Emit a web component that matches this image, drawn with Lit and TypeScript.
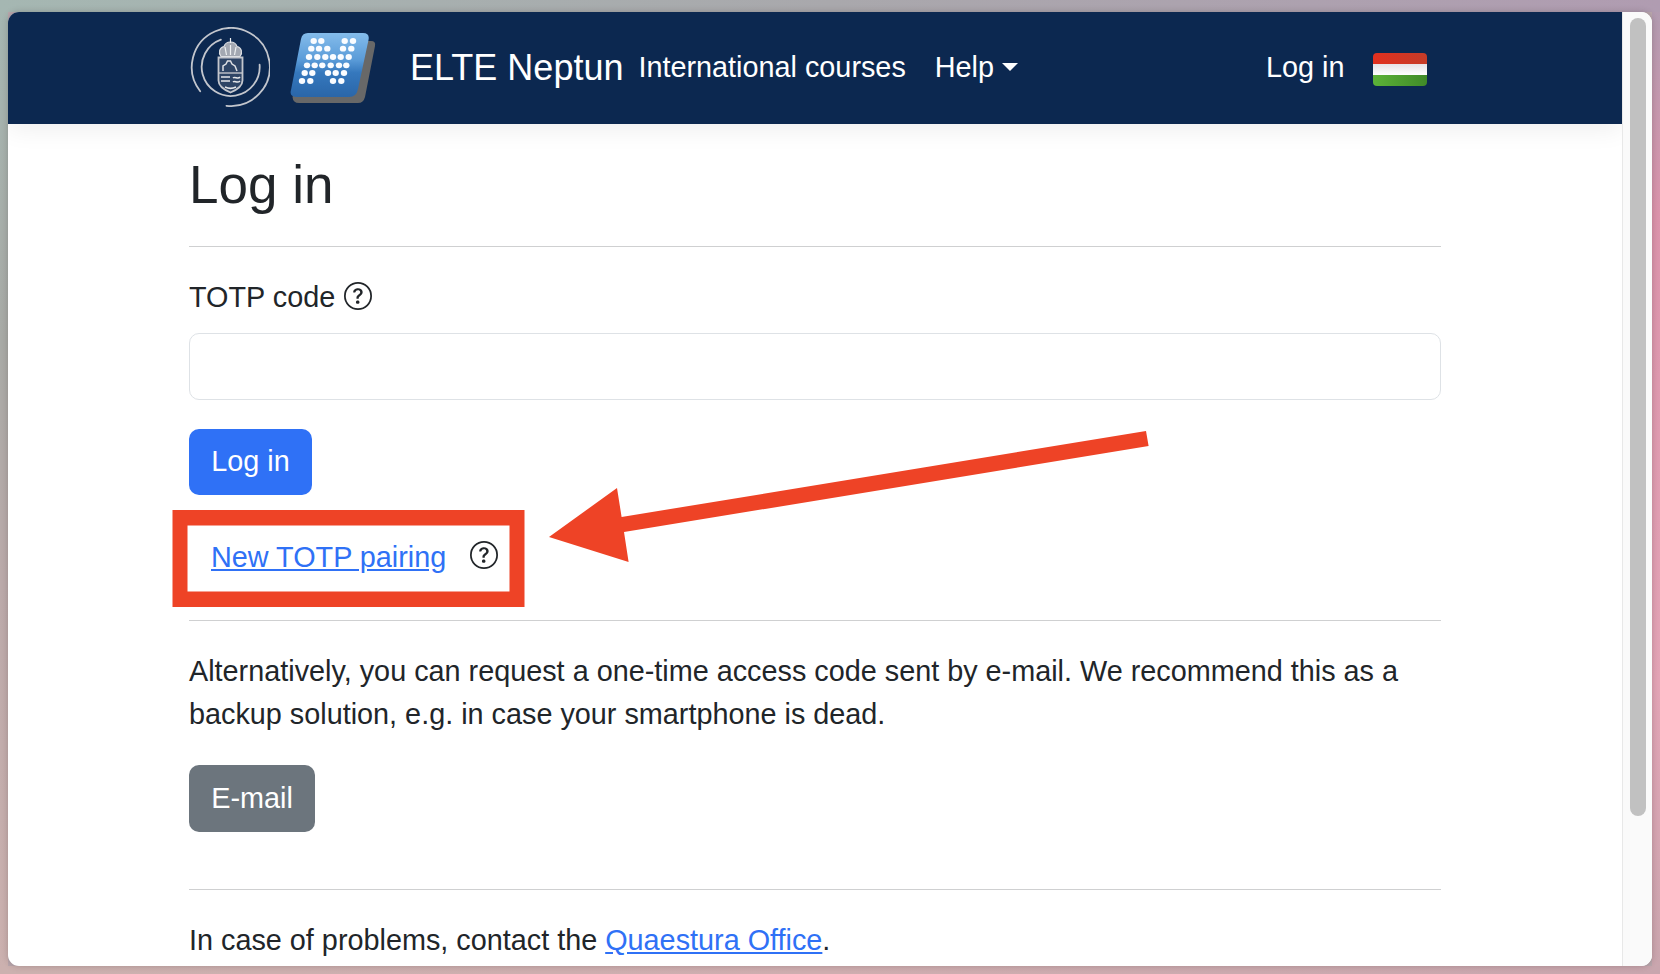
import { LitElement, html, css, svg } from "lit";
import { customElement } from "lit/decorators.js";

const FS = 28.8;

const helpIcon = html`<svg class="help" viewBox="0 0 16 16" fill="currentColor" aria-hidden="true">
  <path d="M8 15A7 7 0 1 1 8 1a7 7 0 0 1 0 14zm0 1A8 8 0 1 0 8 0a8 8 0 0 0 0 16z"/>
  <path d="M5.255 5.786a.237.237 0 0 0 .241.247h.825c.138 0 .248-.113.266-.25.09-.656.54-1.134 1.342-1.134.686 0 1.314.343 1.314 1.168 0 .635-.374.927-.965 1.371-.673.489-1.206 1.06-1.168 1.987l.003.217a.25.25 0 0 0 .25.246h.811a.25.25 0 0 0 .25-.25v-.105c0-.718.273-.927 1.01-1.486.609-.463 1.244-.977 1.244-2.056 0-1.511-1.276-2.241-2.673-2.241-1.267 0-2.655.59-2.75 2.286zm1.557 5.763c0 .533.425.927 1.01.927.609 0 1.028-.394 1.028-.927 0-.552-.42-.94-1.029-.94-.584 0-1.009.388-1.009.94z"/>
</svg>`;

const emblem = html`<svg class="emblem" viewBox="0 0 80 82" fill="none" stroke="#c3c6cd" stroke-width="1.800" aria-hidden="true">
  <path d="M10.200 64.200A39 39 0 1 1 36.400 78.800" stroke-linecap="round"/>
  <path d="M69.600 37.700A29 29 0 1 1 30.900 12.700" stroke-linecap="round"/>
  <path d="M28.500 30.500h24v23c0 6-6 9.500-12 12-6-2.500-12-6-12-12z" fill="#5c6980" fill-opacity=".45" stroke-width="1.800"/>
  <path d="M28.500 46h24" stroke-width="1.400"/>
  <path d="M33 44v-5l3-2 1.500-3 3 0 1.500 3 3 2 2 5" stroke="#dfe1e5" stroke-width="1.500"/>
  <path d="M31 50h9M31 54h9M43 51c2-2 5 2 7-1M43 55c2-2 4 2 7-1M35 60c4 2 7 2 11 0" stroke="#e6e7ea" stroke-width="1.500"/>
  <path d="M31 29.500c-3-4-1.500-9 3-10 1-3 3.500-4.500 6.500-4.500s5.500 1.500 6.500 4.500c4.500 1 6 6 3 10z" fill="#a3a8b2" stroke="#dcdee2" stroke-width="1.200"/>
  <path d="M40.500 11v5M35 20l1.500 8M46 20l-1.500 8M40.500 18v10" stroke="#eef0f2" stroke-width="1.200"/>
</svg>`;

const rows: [number, number[]][] = [
  [10, [25.7, 33.3, 56.7, 65]],
  [17.7, [23.3, 31, 39.3, 55, 63.3]],
  [26, [21, 29.3, 37.3, 45, 52.7, 60.7]],
  [34.3, [19, 26.7, 34.3, 42.7, 51, 58.3]],
  [42, [16.7, 24.3, 40, 47.7, 56]],
  [50, [14, 22.3, 45, 53.3]],
];

const neptun = html`<svg class="neptun" viewBox="0 0 88 74" aria-hidden="true">
  <defs>
    <linearGradient id="np" x1="0" y1="0" x2="0" y2="1">
      <stop offset="0" stop-color="#84bceb"/>
      <stop offset=".42" stop-color="#5a9bd8"/>
      <stop offset=".62" stop-color="#3578bd"/>
      <stop offset="1" stop-color="#2a66a9"/>
    </linearGradient>
  </defs>
  <path d="M24 10H83Q88 10 87 15L77 66Q75.500 72 70 72H11Q5 72 4.500 66z" fill="#686868"/>
  <path d="M20 2H75Q82 2 80.500 9L70 58Q68.500 66 61 66H9Q1 66 3 59L13 8Q14 2 20 2z" fill="url(#np)"/>
  ${rows.map(([y, xs]) =>
    xs.map((x) => svg`<ellipse cx=${x} cy=${y} rx="3.200" ry="2.900" fill="#fafcff"/>`)
  )}
</svg>`;

const flag = html`<svg class="flag" viewBox="0 0 54 33" aria-hidden="true">
  <defs>
    <linearGradient id="fr" x1="0" x2="1"><stop offset="0" stop-color="#e2301f"/><stop offset="1" stop-color="#c53c28"/></linearGradient>
    <linearGradient id="fg" x1="0" x2="1"><stop offset="0" stop-color="#5cb338"/><stop offset="1" stop-color="#408a28"/></linearGradient>
    <linearGradient id="fw" x1="0" y1="0" x2="0" y2="1"><stop offset="0" stop-color="#e6e2e6"/><stop offset="1" stop-color="#ffffff"/></linearGradient>
    <clipPath id="fc"><rect width="54" height="33" rx="4"/></clipPath>
  </defs>
  <g clip-path="url(#fc)">
    <rect width="54" height="12" fill="url(#fr)"/>
    <rect y="11" width="54" height="11" fill="url(#fw)"/>
    <rect y="22" width="54" height="11" fill="url(#fg)"/>
  </g>
</svg>`;

@customElement("app-root")
export class AppRoot extends LitElement {
  static styles = css`
    :host {
      display: block;
      box-sizing: border-box;
      width: 1660px;
      height: 974px;
      padding: 12px 8px 8px;
      overflow: hidden;
      font-family: "Liberation Sans", Arial, sans-serif;
      font-size: ${FS}px;
      line-height: 42px;
      color: #212529;
      background-color: #b9a7ad;
      background-repeat: no-repeat;
      background-image:
        linear-gradient(to right, #a5b7b2, #a9a8ac 50%, #b09cb1),
        linear-gradient(to right, #ccb1af, #cfaeb0 50%, #c9a6ae),
        linear-gradient(to bottom, #a5b7b2, #a8aaa6 35%, #bbaaaa 60%, #ccb1af),
        linear-gradient(to bottom, #b09cb1, #db93ab 22%, #e3a4b6 70%, #c9a6ae);
      background-size: 100% 12px, 100% 8px, 8px 100%, 8px 100%;
      background-position: top left, bottom left, top left, top right;
    }
    .window {
      position: relative;
      display: flex;
      height: 954px;
      border-radius: 11px;
      overflow: hidden;
      background: #fff;
      box-shadow: 0 0 6px rgba(60, 40, 40, 0.25);
    }
    .main {
      flex: 1;
      min-width: 0;
      overflow: hidden;
    }
    .navbar {
      position: relative;
      display: flex;
      align-items: center;
      height: 112px;
      padding-left: 182px;
      background: #0c2850;
      color: #fff;
      box-shadow: 0 5px 24px rgba(0, 0, 0, 0.07);
    }
    .emblem {
      width: 80px;
      height: 82px;
      flex: none;
      filter: blur(0.4px);
    }
    .neptun {
      width: 88px;
      height: 74px;
      flex: none;
      margin-left: 18px;
      filter: blur(0.5px);
    }
    .brand {
      margin-left: 34px;
      padding-bottom: 1px;
      font-size: 36px;
    }
    .nav-link {
      padding-bottom: 2px;
      color: #fff;
      text-decoration: none;
    }
    .nav-first {
      margin-left: 15px;
    }
    .help-link {
      display: inline-flex;
      align-items: center;
      margin-left: 29px;
    }
    .caret {
      width: 0;
      height: 0;
      margin-left: 8px;
      border-top: 8px solid #fff;
      border-left: 8px solid transparent;
      border-right: 8px solid transparent;
    }
    .login {
      margin-left: 248px;
    }
    .flag {
      width: 54px;
      height: 33px;
      margin: 3px 0 0 29px;
      filter: blur(0.4px);
    }
    .content {
      width: 1252px;
      margin-left: 181px;
      padding-top: 30px;
    }
    h1 {
      margin: 0;
      font-size: 53px;
      font-weight: 400;
      line-height: 62px;
    }
    hr {
      height: 1px;
      margin: 0;
      border: 0;
      background: #cfd0d1;
    }
    .h1-rule {
      margin-top: 30px;
    }
    .label {
      display: flex;
      align-items: center;
      margin-top: 29px;
    }
    .help {
      width: 28px;
      height: 28px;
      flex: none;
      color: #212529;
    }
    .label .help {
      margin: 0 0 2px 9px;
    }
    .input {
      display: block;
      box-sizing: border-box;
      width: 100%;
      height: 67px;
      margin-top: 15px;
      border: 1px solid #dee2e6;
      border-radius: 10px;
      background: #fff;
    }
    .btn {
      display: block;
      box-sizing: border-box;
      height: 66px;
      padding: 0 0 2px;
      border: 0;
      border-radius: 10px;
      font: inherit;
      color: #fff;
    }
    .primary {
      width: 123px;
      margin-top: 29px;
      background: #2f71f6;
    }
    .secondary {
      width: 126px;
      height: 67px;
      margin-top: 30px;
      background: #6c757d;
    }
    .pair {
      display: flex;
      align-items: center;
      margin-top: 41px;
      padding-left: 22px;
    }
    a {
      color: #2f71f6;
    }
    .pair .help {
      margin: 0 0 5px 24px;
    }
    .pair-rule {
      margin-top: 42px;
    }
    p {
      margin: 0;
      line-height: 42.5px;
    }
    .alt {
      margin-top: 29px;
    }
    .foot-rule {
      margin-top: 57px;
    }
    .foot {
      margin-top: 29px;
    }
    .scrollbar {
      flex: none;
      box-sizing: border-box;
      width: 30px;
      padding: 6px 6px 0 7px;
      background: #fafafa;
      border-left: 1px solid #e8e8e8;
    }
    .thumb {
      height: 798px;
      border-radius: 8px;
      background: #c1c1c1;
    }
    .callout {
      position: absolute;
      left: -8px;
      top: -12px;
      width: 1660px;
      height: 974px;
      pointer-events: none;
    }
  `;

  render() {
    return html`
      <div class="window">
        <div class="main">
          <header class="navbar">
            ${emblem} ${neptun}
            <span class="brand">ELTE Neptun</span>
            <a class="nav-link nav-first" href="#">International courses</a>
            <a class="nav-link help-link" href="#">Help<span class="caret"></span></a>
            <a class="nav-link login" href="#">Log in</a>
            ${flag}
          </header>
          <main class="content">
            <h1>Log in</h1>
            <hr class="h1-rule" />
            <div class="label">TOTP code ${helpIcon}</div>
            <input class="input" type="text" aria-label="TOTP code" />
            <button class="btn primary">Log in</button>
            <div class="pair"><a href="#">New TOTP pairing</a>${helpIcon}</div>
            <hr class="pair-rule" />
            <p class="alt">
              Alternatively, you can request a one-time access code sent by e-mail. We recommend this as a
              backup solution, e.g. in case your smartphone is dead.
            </p>
            <button class="btn secondary">E-mail</button>
            <hr class="foot-rule" />
            <p class="foot">In case of problems, contact the <a href="#">Quaestura Office</a>.</p>
          </main>
        </div>
        <div class="scrollbar"><div class="thumb"></div></div>
        <svg class="callout" viewBox="0 0 1660 974" aria-hidden="true">
          <path fill-rule="evenodd" fill="#ee4326"
            d="M172.500 510H524.500V607H172.500zM187.500 525.500V591.500H509.500V525.500z"/>
          <path fill="#ee4326"
            d="M549 537 617 488 621.600 517 1146 431 1148.600 446 624 532 628.600 562z"/>
        </svg>
      </div>
    `;
  }
}
